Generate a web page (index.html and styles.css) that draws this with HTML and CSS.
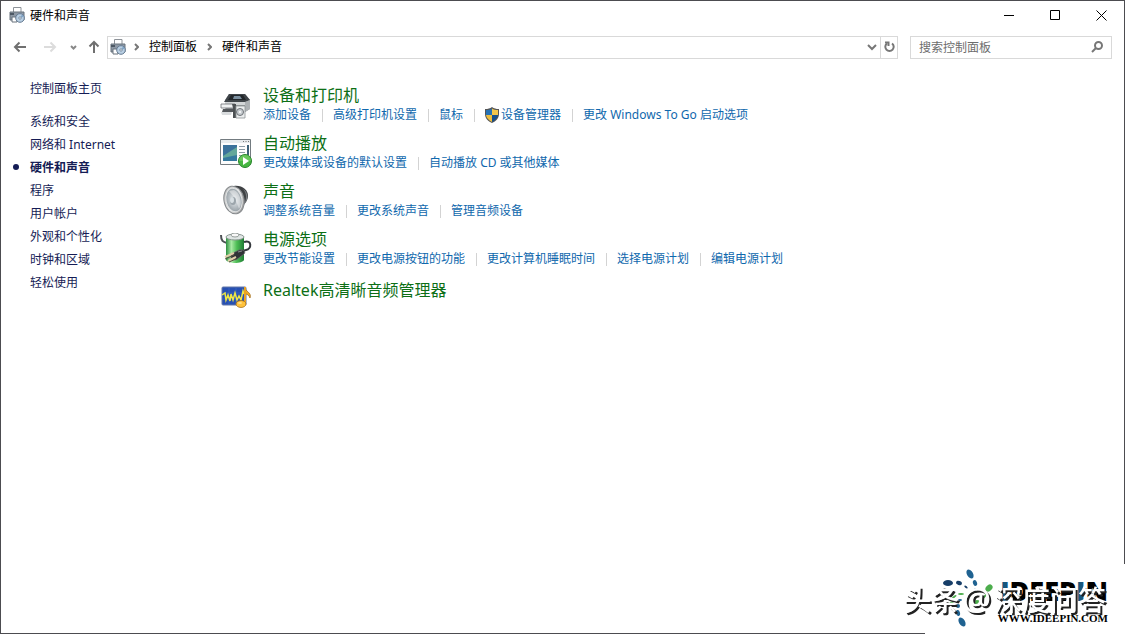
FILE: index.html
```
<!DOCTYPE html>
<html lang="zh-CN">

<head>
    <meta charset="UTF-8">
    <title>硬件和声音</title>
    <link rel="stylesheet" href="styles.css">
</head>

<body>
    <!-- shared icon, used in the title bar and the address bar -->
    <svg class="symbols" aria-hidden="true">
        <symbol id="hardware" viewBox="0 0 16 16">
            <path d="M4.500 5V.5h7.500V5" fill="#fff" stroke="#8d9298" />
            <path d="M1 5h14v8H1z" fill="#8d98a5" stroke="#69727d" />
            <path d="M1 6h4v2H1z" fill="#4d5864" />
            <path d="M3 10h5v5H3z" fill="#fff" stroke="#69727d" />
            <circle cx="11" cy="11" r="4.300" fill="#b9cfe3" stroke="#657b92" />
            <path d="M11 11l2-3.500a4 4 0 0 1 1.800 2z" fill="#7fa3c5" />
            <circle cx="11" cy="11" r="1.200" fill="#fff" stroke="#657b92" stroke-width=".8" />
        </symbol>
    </svg>

    <div class="window">
        <header class="titlebar">
            <svg class="icon16"><use href="#hardware" /></svg>
            <span class="title">硬件和声音</span>
            <button class="winbtn" aria-label="最小化">
                <svg width="11" height="11"><path d="M0 5.500h10" stroke="#000" /></svg>
            </button>
            <button class="winbtn" aria-label="最大化">
                <svg width="11" height="11"><path d="M.5.5h9v9h-9z" fill="none" stroke="#000" /></svg>
            </button>
            <button class="winbtn" aria-label="关闭">
                <svg width="11" height="11"><path d="M.5.500l10 10M10.500.500l-10 10" stroke="#000" /></svg>
            </button>
        </header>

        <div class="toolbar">
            <button class="navbtn" aria-label="后退">
                <svg width="14" height="12" class="stroke"><path d="M13 6H2M6.500 1.500L2 6l4.500 4.500" stroke="#707070" /></svg>
            </button>
            <button class="navbtn forward" aria-label="前进" disabled>
                <svg width="14" height="12" class="stroke"><path d="M1 6h11M7.500 1.500L12 6l-4.500 4.500" stroke="#dcdcdc" /></svg>
            </button>
            <button class="navbtn recent" aria-label="最近的位置">
                <svg width="7" height="5" class="stroke"><path d="M1 1l2.500 2.500L6 1" stroke="#888" /></svg>
            </button>
            <button class="navbtn up" aria-label="上移">
                <svg width="12" height="14" class="stroke"><path d="M6 13V2M1.500 6.500L6 2l4.500 4.500" stroke="#707070" /></svg>
            </button>

            <nav class="address">
                <svg class="icon16"><use href="#hardware" /></svg>
                <svg class="arrow stroke" width="5" height="8"><path d="M1 1l3 3-3 3" stroke="#777" /></svg>
                <a href="#">控制面板</a>
                <svg class="arrow stroke" width="5" height="8"><path d="M1 1l3 3-3 3" stroke="#777" /></svg>
                <a href="#">硬件和声音</a>
                <button class="history" aria-label="以前的位置">
                    <svg width="10" height="7" class="stroke"><path d="M1 1l4 4 4-4" stroke="#777" /></svg>
                </button>
                <button class="refresh" aria-label="刷新">
                    <svg width="11" height="12" class="stroke"><path d="M8 2.500a4.200 4.200 0 1 1-5 0" stroke="#777" /><path d="M1 1.500h3.500V5" stroke="#777" /></svg>
                </button>
            </nav>

            <form class="search">
                <input type="text" placeholder="搜索控制面板" aria-label="搜索控制面板">
                <button type="button" aria-label="搜索">
                    <svg width="12" height="12" class="stroke"><circle cx="7.500" cy="4.500" r="3.500" stroke="#777" /><path d="M5 7L1 11" stroke="#777" /></svg>
                </button>
            </form>
        </div>

        <div class="content">
            <aside class="sidebar">
                <a class="home" href="#">控制面板主页</a>
                <ul>
                    <li><a href="#">系统和安全</a></li>
                    <li><a href="#">网络和 Internet</a></li>
                    <li class="current"><a href="#">硬件和声音</a></li>
                    <li><a href="#">程序</a></li>
                    <li><a href="#">用户帐户</a></li>
                    <li><a href="#">外观和个性化</a></li>
                    <li><a href="#">时钟和区域</a></li>
                    <li><a href="#">轻松使用</a></li>
                </ul>
            </aside>

            <main>
                <section class="category">
                    <svg class="icon32" viewBox="0 0 32 32">
                        <path d="M9 5h16l5 6v9l-5 3H8l-3-4v-8z" fill="#8f9396" />
                        <path d="M9 5h16l5 6-5 2H4z" fill="#3f4449" />
                        <path d="M11 6h12l3 5H8z" fill="#23272b" />
                        <path d="M14 7h6l2 3h-9z" fill="#7b8f9f" />
                        <path d="M5 13h20v3H5z" fill="#d3d6d8" />
                        <path d="M25 13l5-2v9l-5 3z" fill="#aeb2b5" />
                        <path d="M1 15h14v4H1z" fill="#f0f2f3" stroke="#6c7074" stroke-width=".8" />
                        <path d="M3 20h10v3H2z" fill="#54585c" />
                        <path d="M1 23h11l-1 3H2z" fill="#d9dcde" />
                        <path d="M12 15h4v14h-3V19z" fill="#4d5154" />
                        <path d="M16 17h9v12h-9z" fill="#eceeef" stroke="#8d9295" stroke-width=".8" />
                        <circle cx="20" cy="23" r="3.500" fill="#c7ccd0" stroke="#6d7277" />
                        <circle cx="20" cy="23" r="1" fill="#fff" />
                    </svg>
                    <div class="info">
                        <h2><a href="#">设备和打印机</a></h2>
                        <ul class="links">
                            <li><a href="#">添加设备</a></li>
                            <li><a href="#">高级打印机设置</a></li>
                            <li><a href="#">鼠标</a></li>
                            <li>
                                <svg class="shield" viewBox="0 0 14 16">
                                    <path d="M7 0c2 1.500 4 2 7 2v5c0 4-3 7.500-7 9-4-1.500-7-5-7-9V2c3 0 5-.5 7-2z" fill="#555" />
                                    <path d="M7 1.500V8H1V3c2.500 0 4.500-.5 6-1.500z" fill="#2772b5" />
                                    <path d="M7 1.500C8.500 2.500 10.500 3 13 3v5H7z" fill="#f3c64c" />
                                    <path d="M1 8h6v7C4 13.500 1.300 11 1 8z" fill="#edbd3f" />
                                    <path d="M7 8h6c-.3 3-3 5.500-6 7z" fill="#15508e" />
                                </svg>
                                <a href="#">设备管理器</a>
                            </li>
                            <li><a href="#">更改 Windows To Go 启动选项</a></li>
                        </ul>
                    </div>
                </section>

                <section class="category">
                    <svg class="icon32" viewBox="0 0 32 32">
                        <path d="M.5 2.500h30v25H.5z" fill="#fdfdfd" stroke="#737b80" />
                        <path d="M1 3h29v3H1z" fill="#e7ebed" />
                        <path d="M23 4.500h1M25.500 4.500h1M28 4.500h1" stroke="#777" />
                        <path d="M3 8h14v16H3z" fill="#397eb4" />
                        <path d="M3 8h14v4L3 20z" fill="#3b729b" />
                        <path d="M3 19l14-9v14H3z" fill="#63a79a" />
                        <path d="M3 21l14-3v6H3z" fill="#35799e" />
                        <path d="M19 9.500h6M19 12.500h6M19 15.500h6M19 18.500h3" stroke="#8d9da7" />
                        <path d="M28 8v10" stroke="#3c6077" stroke-width="2" />
                        <circle cx="25" cy="24" r="6.500" fill="#46b641" stroke="#27852a" />
                        <path d="M19 24a6 6 0 0 1 12 0z" fill="#79cf69" opacity=".65" />
                        <path d="M23 20l6 4-6 4z" fill="#fff" />
                    </svg>
                    <div class="info">
                        <h2><a href="#">自动播放</a></h2>
                        <ul class="links">
                            <li><a href="#">更改媒体或设备的默认设置</a></li>
                            <li><a href="#">自动播放 CD 或其他媒体</a></li>
                        </ul>
                    </div>
                </section>

                <section class="category">
                    <svg class="icon32" viewBox="0 0 32 32">
                        <defs>
                            <linearGradient id="rim" x2="1" y2="1">
                                <stop stop-color="#aaa" />
                                <stop offset=".5" stop-color="#eee" />
                                <stop offset="1" stop-color="#777" />
                            </linearGradient>
                            <radialGradient id="cone">
                                <stop stop-color="#e9edf0" />
                                <stop offset="1" stop-color="#98a1a7" />
                            </radialGradient>
                        </defs>
                        <path d="M14 1c8-1 14 4 14 10 0 5-4 9-10 14z" fill="#3e4143" />
                        <path d="M23 4c4 4 4 11 0 17l3-4c3-5 1-11-3-13z" fill="#777b7e" />
                        <ellipse cx="14" cy="15" rx="10" ry="14" transform="rotate(-12 14 15)" fill="url(#rim)" stroke="#85898c" />
                        <ellipse cx="14" cy="15" rx="8" ry="12" transform="rotate(-12 14 15)" fill="url(#cone)" stroke="#dfe2e3" />
                        <path d="M9 6l6 7 4 11c4-5 1-17-5-19z" fill="#fff" opacity=".4" />
                        <ellipse cx="13" cy="16" rx="3" ry="4" fill="#9ca5ab" />
                        <ellipse cx="12" cy="15" rx="2" ry="3" fill="#d9e0e4" />
                    </svg>
                    <div class="info">
                        <h2><a href="#">声音</a></h2>
                        <ul class="links">
                            <li><a href="#">调整系统音量</a></li>
                            <li><a href="#">更改系统声音</a></li>
                            <li><a href="#">管理音频设备</a></li>
                        </ul>
                    </div>
                </section>

                <section class="category">
                    <svg class="icon32" viewBox="0 0 32 32">
                        <defs>
                            <linearGradient id="battery">
                                <stop stop-color="#2d8f40" />
                                <stop offset=".3" stop-color="#a9eaa5" />
                                <stop offset=".6" stop-color="#4dbd55" />
                                <stop offset="1" stop-color="#1f7d34" />
                            </linearGradient>
                        </defs>
                        <path d="M1 2c0 6 2 7 6 8" fill="none" stroke="#4c5154" stroke-width="2" />
                        <path d="M6 4v23c2 4 16 4 18 0V4z" fill="url(#battery)" />
                        <ellipse cx="15" cy="4" rx="9" ry="3" fill="#dfe5e4" stroke="#8a9691" />
                        <ellipse cx="15" cy="2" rx="4" ry="2" fill="#f8f8f8" stroke="#969e9b" />
                        <path d="M24 9c8-3 8 7 2 8-3 .5-5 1-7 3" fill="none" stroke="#34383c" stroke-width="2" />
                        <path d="M11 21l8-4c5-1 7 2 5 4l-8 6-5-1z" fill="#303337" stroke="#686b6d" stroke-width=".7" />
                        <path d="M14 20l-9 4M16 24l-8 4" stroke="#e0cda9" stroke-width="2" />
                        <path d="M14 22l-9 4M16 26l-7 3" stroke="#56503f" />
                        <path d="M18 19l4-1" stroke="#8c9092" />
                    </svg>
                    <div class="info">
                        <h2><a href="#">电源选项</a></h2>
                        <ul class="links">
                            <li><a href="#">更改节能设置</a></li>
                            <li><a href="#">更改电源按钮的功能</a></li>
                            <li><a href="#">更改计算机睡眠时间</a></li>
                            <li><a href="#">选择电源计划</a></li>
                            <li><a href="#">编辑电源计划</a></li>
                        </ul>
                    </div>
                </section>

                <section class="category single">
                    <svg class="icon32" viewBox="0 0 32 32">
                        <rect x="2" y="6" width="24" height="18" rx="1" fill="#2750b2" stroke="#6277a8" />
                        <path d="M3 12h22M3 18h22M9 7v17M16 7v17" stroke="#426bc7" stroke-width=".6" />
                        <path d="M2 14l3-2 1 7 2-5 2 6 1-7 2 6 2-7 2 7 2-4 2 4 2-9 1 3" fill="none" stroke="#f0e743" stroke-width="1.500" />
                        <path d="M25 6c0 5 7 5 5 11-1-3-3-4-5-4v10" fill="#efaa25" stroke="#9b6514" stroke-width=".7" />
                        <path d="M25 6v17" stroke="#e9a323" stroke-width="2" />
                        <ellipse cx="21" cy="23" rx="5" ry="3.500" fill="#ffc23c" stroke="#9b6514" stroke-width=".7" />
                        <ellipse cx="20" cy="22" rx="2" ry="1" fill="#ffe18b" />
                    </svg>
                    <div class="info">
                        <h2><a href="#">Realtek高清晰音频管理器</a></h2>
                    </div>
                </section>
            </main>
        </div>
    </div>

    <div class="watermark">
        <svg class="swirl" viewBox="0 0 56 60">
            <g fill="#1f6291">
                <ellipse cx="29" cy="6" rx="3" ry="5" transform="rotate(-30 29 6)" />
                <ellipse cx="34" cy="15" rx="2" ry="3" transform="rotate(-20 34 15)" />
                <ellipse cx="34" cy="22" rx="1" ry="2" />
                <ellipse cx="21" cy="54" rx="3" ry="5" transform="rotate(-30 21 54)" />
                <ellipse cx="17" cy="45" rx="2" ry="3" transform="rotate(-15 17 45)" />
                <ellipse cx="17" cy="38" rx="2" ry="2" />
                <ellipse cx="19" cy="32" rx="2" ry="1" />
            </g>
            <g fill="#173e68">
                <ellipse cx="7" cy="15" rx="5" ry="3" />
                <ellipse cx="18" cy="15" rx="3" ry="2" transform="rotate(20 18 15)" />
                <ellipse cx="25" cy="19" rx="2" ry="1" transform="rotate(40 25 19)" />
            </g>
            <g fill="#4cad4c">
                <ellipse cx="48" cy="20" rx="4" ry="3" transform="rotate(-45 48 20)" />
                <ellipse cx="44" cy="28" rx="3" ry="1" transform="rotate(-55 44 28)" />
                <ellipse cx="20" cy="26" rx="3" ry="1" />
                <ellipse cx="13" cy="29" rx="3" ry="1" transform="rotate(-35 13 29)" />
                <ellipse cx="10" cy="36" rx="3" ry="2" transform="rotate(-40 10 36)" />
                <ellipse cx="36" cy="34" rx="3" ry="2" />
            </g>
        </svg>
        <div class="brand">
            <strong><i>I</i>DEEP<i>I</i>N</strong>
            <span>WWW.IDEEPIN.COM</span>
        </div>
        <div class="author">头条<span>@</span>深度问答</div>
    </div>
</body>

</html>
```
FILE: styles.css
```
* {
    box-sizing: border-box;
}

body {
    margin: 0;
    background-color: #fff;
    color: #000;
    font-family: "Noto Sans", "Noto Sans CJK SC", sans-serif;
    font-size: 12px;
    line-height: 18px;
}

a {
    color: inherit;
    text-decoration: none;
}

.info a:hover,
.sidebar a:hover {
    text-decoration: underline;
}

button {
    display: flex;
    align-items: center;
    justify-content: center;
    padding: 0;
    border: none;
    background: none;
}

ul {
    list-style: none;
    margin: 0;
    padding: 0;
}

svg {
    flex-shrink: 0;
}

.symbols {
    position: absolute;
    width: 0;
    height: 0;
}

.stroke {
    fill: none;
    stroke-width: 2;
}

.icon16 {
    width: 16px;
    height: 16px;
}

.icon32 {
    width: 32px;
    height: 32px;
}

.window {
    min-height: 100vh;
    border: 1px solid #4c4c50;
}

/* title bar */
.titlebar {
    display: flex;
    align-items: center;
    height: 28px;
    padding-left: 8px;
}

.title {
    flex: 1;
    margin-left: 5px;
    padding-top: 2px;
}

.winbtn {
    width: 46px;
    height: 28px;
}

.winbtn:hover {
    background-color: #e5e5e5;
}

/* navigation */
.toolbar {
    display: flex;
    align-items: center;
    height: 36px;
    padding: 0 12px;
}

.navbtn {
    width: 14px;
    height: 22px;
}

.forward {
    margin-left: 16px;
}

.recent {
    margin-left: 9px;
}

.up {
    margin: 0 6px 0 7px;
}

.address {
    display: flex;
    align-items: center;
    flex: 1;
    height: 23px;
    padding-left: 2px;
    border: 1px solid #d9d9d9;
}

.arrow {
    margin: 0 10px 0 8px;
}

.address a + .arrow {
    margin-left: 10px;
}

.history {
    width: 16px;
    height: 21px;
    margin-left: auto;
}

.refresh {
    width: 17px;
    height: 21px;
    border-left: 1px solid #d9d9d9;
}

.search {
    display: flex;
    width: 202px;
    height: 23px;
    margin-left: 12px;
    border: 1px solid #d9d9d9;
}

.search input {
    flex: 1;
    min-width: 0;
    padding: 2px 8px 0;
    border: none;
    outline: none;
    background: none;
    font: inherit;
}

.search input::placeholder {
    color: #6d6d6d;
    opacity: 1;
}

.search button {
    width: 28px;
}

/* content */
.content {
    display: flex;
    padding-top: 15px;
}

.sidebar {
    width: 219px;
    padding-left: 29px;
    color: #151c55;
}

.home {
    display: block;
    margin-bottom: 12px;
}

.sidebar li {
    height: 23px;
    line-height: 23px;
}

.current {
    position: relative;
    font-weight: bold;
}

.current::before {
    content: "";
    position: absolute;
    left: -17px;
    top: 8px;
    width: 6px;
    height: 6px;
    border-radius: 50%;
    background-color: #151c55;
}

main {
    flex: 1;
    padding-top: 4px;
}

.category {
    display: flex;
    align-items: flex-start;
    height: 48px;
}

.category .icon32 {
    margin-top: 5px;
}

.info {
    margin-left: 11px;
}

h2 {
    margin: 0;
    color: #0d6f16;
    font-size: 16px;
    font-weight: normal;
    line-height: 22px;
}

.single h2 {
    margin-top: 3px;
}

.links {
    display: flex;
    flex-wrap: wrap;
    color: #0f68ad;
    line-height: 18px;
}

.links li {
    display: flex;
    align-items: center;
}

.links li + li::before {
    content: "";
    width: 1px;
    height: 13px;
    margin: 0 10px 0 11px;
    background-color: #d3d3d3;
}

.shield {
    width: 14px;
    height: 16px;
    margin-right: 2px;
}

/* site mark, lies over the corner of the window */
.watermark {
    position: fixed;
    right: 0;
    bottom: 0;
    width: 200px;
    height: 70px;
    background-color: #fff;
}

.swirl {
    position: absolute;
    left: 16px;
    top: 4px;
    width: 56px;
    height: 60px;
}

.brand {
    position: absolute;
    right: 17px;
    top: 8px;
    color: #000;
    text-align: right;
    white-space: nowrap;
}

.brand strong,
.brand span {
    display: block;
}

.brand strong {
    font-family: "Open Sans", sans-serif;
    font-size: 27px;
    font-weight: 800;
    line-height: 38px;
    height: 38px;
}

.brand i {
    color: #17567d;
    font-style: normal;
}

.brand span {
    font-family: "Liberation Serif", serif;
    font-size: 11px;
    font-weight: bold;
    line-height: 16px;
}

.author {
    position: absolute;
    right: 19px;
    top: 16px;
    color: #fff;
    font-size: 28px;
    font-weight: 500;
    line-height: 40px;
    text-shadow: 2px 2px 0 #222;
    white-space: nowrap;
}

.author span {
    margin: 0 3px;
    font-size: 32px;
    line-height: 32px;
}
```
